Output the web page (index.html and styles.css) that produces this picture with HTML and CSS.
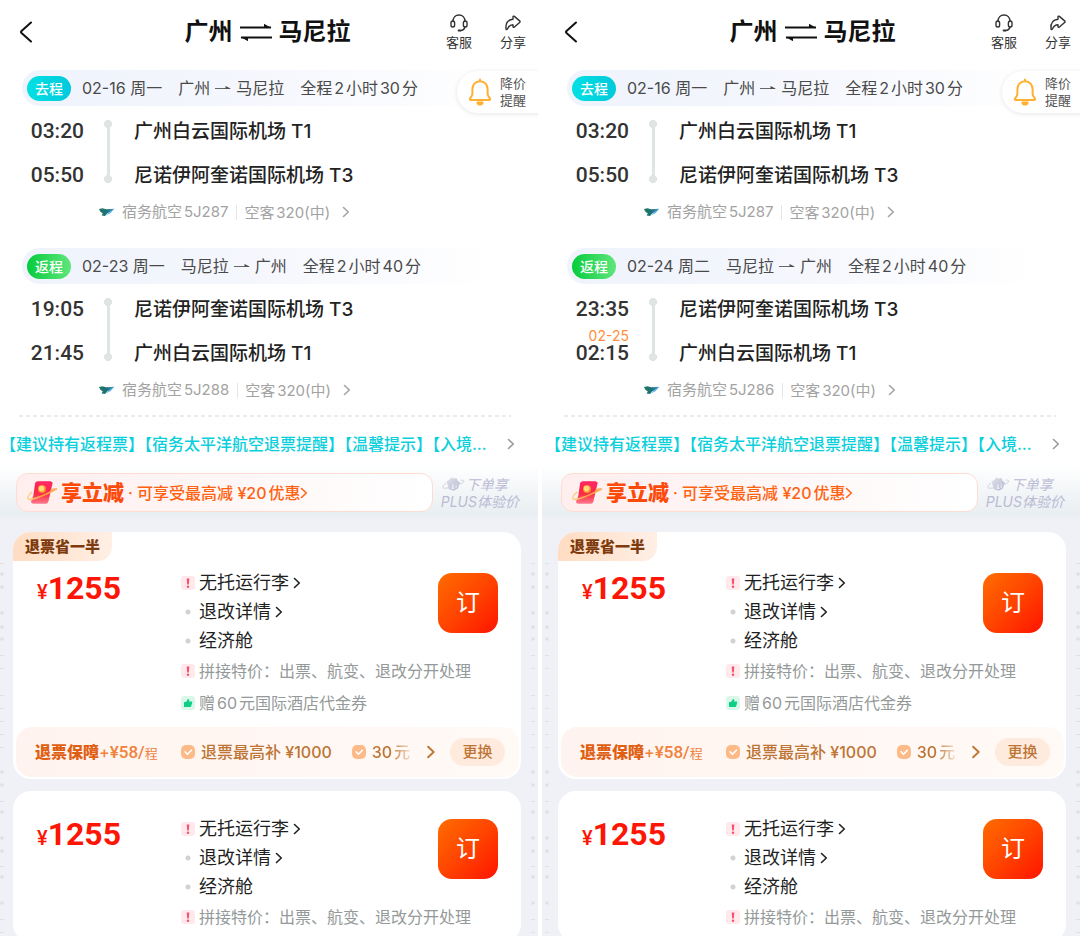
FILE: index.html
```html
<!DOCTYPE html>
<html lang="zh-CN">
<head>
<meta charset="utf-8">
<meta name="viewport" content="width=device-width, initial-scale=1">
<title>广州 ⇌ 马尼拉</title>
<link rel="stylesheet" href="styles.css">
</head>
<body>
<svg class="defs" width="0" height="0" aria-hidden="true">
  <defs>
    <linearGradient id="g-red" x1="0" y1="0" x2="0" y2="1"><stop offset="0" stop-color="#fb1c50"/><stop offset=".6" stop-color="#fb3048"/><stop offset="1" stop-color="#ff7b90"/></linearGradient>
    <linearGradient id="g-gold" x1="0" y1="0" x2="1" y2="0"><stop offset="0" stop-color="#ffd58a"/><stop offset=".5" stop-color="#ff9a3c"/><stop offset="1" stop-color="#ffb46a"/></linearGradient>
    <linearGradient id="g-plane" x1="0" y1="0" x2="1" y2="0"><stop offset="0" stop-color="#1f7a5a"/><stop offset=".5" stop-color="#1d6f7c"/><stop offset="1" stop-color="#4aa3dc"/></linearGradient>
    <linearGradient id="g-plus" x1="0" y1="0" x2="1" y2="1"><stop offset="0" stop-color="#e3e4ee"/><stop offset="1" stop-color="#b4b5cf"/></linearGradient>
  </defs>
  <symbol id="i-back" viewBox="0 0 14 22"><path d="M12 1.500 2.500 10q-1 1 0 2L12 20.500" fill="none" stroke="#111" stroke-width="2" stroke-linecap="round" stroke-linejoin="round"/></symbol>
  <symbol id="i-swap" viewBox="0 0 32 18"><path d="M0 4.500h31M32 14.500H1" fill="none" stroke="#111" stroke-width="1.800"/><path d="M24 .8 31.500 5H24zM8 18.200.500 14H8z" fill="#111"/></symbol>
  <symbol id="i-headset" viewBox="0 0 20 20"><g fill="none" stroke="#333" stroke-width="1.400" stroke-linecap="round"><path d="M4 8.500C4 4.500 6.500 2 10 2s6 2.500 6 6.500"/><rect x="2" y="8" width="3.600" height="6" rx="1.800"/><rect x="14.400" y="8" width="3.600" height="6" rx="1.800"/><path d="M16 14.200c-.6 2-2.200 3.200-4.600 3.400"/></g><rect x="8.600" y="16.600" width="3.800" height="2" rx="1" fill="#333"/></symbol>
  <symbol id="i-share" viewBox="0 0 18 18"><path d="M9 3c0-.9.700-1.200 1.400-.6l5.200 4.500c.6.500.6 1.100 0 1.600l-5.200 4.600c-.7.600-1.400.3-1.400-.6v-1.800c-2.600.1-4.300 1.300-5.600 4.300-.4.900-1.300.7-1.400-.2C1.500 9.500 4 5.800 9 5.300z" fill="none" stroke="#333" stroke-width="1.400" stroke-linejoin="round"/></symbol>
  <symbol id="i-bell" viewBox="0 0 24 28"><g fill="none" stroke="#ffb030" stroke-width="2" stroke-linecap="round" stroke-linejoin="round"><path d="M12 3.200c-4.800 0-7.600 3.600-7.600 8v4.600c0 2-.8 3-2 4.200-1 1-.7 2 .7 2h17.800c1.400 0 1.700-1 .7-2-1.200-1.200-2-2.200-2-4.200v-4.600c0-4.400-2.800-8-7.600-8z"/><path d="M12 1.600v1.600M9.400 24.500c.4 2.600 4.800 2.600 5.200 0z"/></g></symbol>
  <symbol id="i-arrow" viewBox="0 0 16 8"><path d="M0 4.500h15" stroke="#666"/><path d="M10.500 2 16 4.800h-5.500z" fill="#4d4d4d"/></symbol>
  <symbol id="i-chev" viewBox="0 0 8 12"><path d="m1.500 1.500 4.800 4.500-4.800 4.500" fill="none" stroke="currentColor" stroke-width="1.600" stroke-linecap="round" stroke-linejoin="round"/></symbol>
  <symbol id="i-plane" viewBox="0 0 16 10"><path d="M0 2 3.500 1.200 7 2.200l8.500-.4L12 4.600 8 6.500 6 9 2.600 8.600l1.200-2.200L1.200 4.600z" fill="url(#g-plane)"/><path d="m5.500 9 4-3L15 2.200l-3.600 4z" fill="#5bb4e6"/></symbol>
  <symbol id="i-gift" viewBox="0 0 32 26"><path d="M12 1.500h12c2 0 2.800 1 2.300 2.800L22.500 21c-.4 2-1.500 2.800-3.500 2.800H7.500c-2 0-2.800-1-2.200-3l2-5L9 4c.4-1.700 1.300-2.500 3-2.500z" fill="url(#g-red)"/><path d="M9.500 3c3 9 10 9 16 3l.8-3c0-1-1-1.500-2.300-1.500H12c-1.500 0-2.200.5-2.500 1.500z" fill="#ff2860"/><path d="M6 12C1 16 .6 19.500 4 19.400 11 19 23 13 31 8.800c-4 .3-5 .7-6.500 1.600" fill="none" stroke="url(#g-gold)" stroke-width="1.600"/><circle cx="16" cy="9" r="4" fill="#ff8e2e"/><circle cx="15.600" cy="8.600" r="2.800" fill="#ffdc7a"/></symbol>
  <symbol id="i-plus" viewBox="0 0 24 16"><path d="M5.500 5.500 8 4l2.200-2.500L13 2.600 15.500 2l1.300 3L19 6.500l-2.200 6-4 2.200-4.800-1.500z" fill="url(#g-plus)"/><path d="M12 7.500 13.500 13 10 12.500zM15 6l.8 5.500-1.300.8z" fill="#f4f4f9"/><path d="M5 7C1.500 9.500.8 12 3.500 12.200 9 12.400 18 9.500 22.500 6c1-1.600-.5-2-3-1.800" fill="none" stroke="#d0d1e2"/></symbol>
  <symbol id="i-warn" viewBox="0 0 14 14"><rect width="14" height="14" rx="3" fill="#ffe9ec"/><path d="M5.700 2.500h2.600l-.5 6H6.200z" fill="#f8506a"/><circle cx="7" cy="10.700" r="1.200" fill="#f8506a"/></symbol>
  <symbol id="i-thumb" viewBox="0 0 14 14"><rect width="14" height="14" rx="3" fill="#d9f8ea"/><path d="M3 6h2v5H3zM5 6l2-3c1.200 0 1.500.8 1.100 2.400h2.200c.8 0 1.100.5.900 1.200l-1 3.600c-.2.600-.5.800-1.100.8H5z" fill="#0ccf85"/></symbol>
  <symbol id="i-check" viewBox="0 0 14 14"><rect width="14" height="14" rx="5" fill="#fcba88"/><path d="m4 6.800 2.400 2.400 4-4" fill="none" stroke="#fff" stroke-width="1.600" stroke-linecap="round" stroke-linejoin="round"/></symbol>
  <symbol id="i-marks" viewBox="0 0 4 376"><g fill="#dfe0e4"><circle cx="2" cy="12" r="1.800"/><circle cx="2" cy="25" r="1.800"/><circle cx="2" cy="51" r="1.800"/><circle cx="2" cy="65" r="1.800"/><circle cx="2" cy="77" r="1.800"/><circle cx="2" cy="210" r="1.800"/><circle cx="2" cy="223" r="1.800"/><circle cx="2" cy="250" r="1.800"/><circle cx="2" cy="276" r="1.800"/><circle cx="2" cy="289" r="1.800"/><circle cx="2" cy="315" r="1.800"/><circle cx="2" cy="341" r="1.800"/></g><path d="M0 1.500h4M0 93.500h4M0 106.500h4M0 133.500h4M0 146.500h4M0 159.500h4M0 172.500h4M0 185.500h4M0 239.500h4M0 304.500h4M0 357.500h4M0 370.500h4" stroke="#dfe0e4"/></symbol>
</svg>

<main class="compare">
  <section class="panel panel-first">
    <header class="topbar">
      <button class="back" aria-label="返回"><svg width="14" height="22"><use href="#i-back"/></svg></button>
      <h1 class="title">广州<svg width="32" height="18"><use href="#i-swap"/></svg>马尼拉</h1>
      <nav class="actions">
        <button class="action"><svg width="20" height="20"><use href="#i-headset"/></svg>客服</button>
        <button class="action"><svg width="18" height="20"><use href="#i-share"/></svg>分享</button>
      </nav>
    </header>
    <button class="price-alert"><svg width="24" height="28"><use href="#i-bell"/></svg><span>降价<br>提醒</span></button>

    <article class="leg">
      <div class="strip"><span class="tag tag-out">去程</span><span>02-16 周一</span><span class="route">广州<svg width="16" height="8"><use href="#i-arrow"/></svg>马尼拉</span><span>全程2小时30分</span></div>
      <div class="stops">
        <time>03:20</time><i class="rail"></i><span class="airport">广州白云国际机场 T1</span>
        <time>05:50</time><span class="airport">尼诺伊阿奎诺国际机场 T3</span>
      </div>
      <a class="flight" href="#"><svg width="16" height="10"><use href="#i-plane"/></svg><span>宿务航空5J287</span><span class="plane">空客320(中)</span><svg class="chev" width="8" height="12"><use href="#i-chev"/></svg></a>
    </article>
    <article class="leg">
      <div class="strip"><span class="tag tag-back">返程</span><span>02-23 周一</span><span class="route">马尼拉<svg width="16" height="8"><use href="#i-arrow"/></svg>广州</span><span>全程2小时40分</span></div>
      <div class="stops">
        <time>19:05</time><i class="rail"></i><span class="airport">尼诺伊阿奎诺国际机场 T3</span>
        <time>21:45</time><span class="airport">广州白云国际机场 T1</span>
      </div>
      <a class="flight" href="#"><svg width="16" height="10"><use href="#i-plane"/></svg><span>宿务航空5J288</span><span class="plane">空客320(中)</span><svg class="chev" width="8" height="12"><use href="#i-chev"/></svg></a>
    </article>

    <hr class="dash">
    <a class="notice" href="#"><span>【建议持有返程票】【宿务太平洋航空退票提醒】【温馨提示】【入境…</span><svg width="8" height="12"><use href="#i-chev"/></svg></a>

    <div class="promos">
      <a class="promo" href="#"><svg width="32" height="26"><use href="#i-gift"/></svg><b>享立减</b><span>· 可享受最高减 ¥20优惠</span><svg width="8" height="12"><use href="#i-chev"/></svg></a>
      <a class="plus" href="#"><span><svg width="24" height="16"><use href="#i-plus"/></svg>下单享</span><span>PLUS体验价</span></a>
    </div>

    <div class="offers">
      <svg class="marks marks-l" width="4" height="376"><use href="#i-marks"/></svg>
      <svg class="marks marks-r" width="4" height="376"><use href="#i-marks"/></svg>
      <article class="card">
        <div class="ribbon">退票省一半</div>
        <div class="fare">
          <p class="price"><small>¥</small>1255</p>
          <ul class="terms">
            <li><svg width="14" height="14"><use href="#i-warn"/></svg><a href="#">无托运行李<svg width="8" height="12"><use href="#i-chev"/></svg></a></li>
            <li><i class="dot"></i><a href="#">退改详情<svg width="8" height="12"><use href="#i-chev"/></svg></a></li>
            <li><i class="dot"></i>经济舱</li>
            <li class="minor"><svg width="14" height="14"><use href="#i-warn"/></svg>拼接特价：出票、航变、退改分开处理</li>
            <li class="minor"><svg width="14" height="14"><use href="#i-thumb"/></svg>赠60元国际酒店代金券</li>
          </ul>
          <button class="book">订</button>
        </div>
        <div class="cover">
          <p class="cover-name"><b>退票保障</b>+<strong>¥58/</strong><small>程</small></p>
          <span class="perk"><svg width="14" height="14"><use href="#i-check"/></svg>退票最高补 ¥1000</span>
          <span class="perk perk-cut"><svg width="14" height="14"><use href="#i-check"/></svg>30元</span>
          <svg class="cover-chev" width="10" height="14"><use href="#i-chev"/></svg>
          <button class="swap">更换</button>
        </div>
      </article>
      <article class="card card-plain">
        <div class="fare">
          <p class="price"><small>¥</small>1255</p>
          <ul class="terms">
            <li><svg width="14" height="14"><use href="#i-warn"/></svg><a href="#">无托运行李<svg width="8" height="12"><use href="#i-chev"/></svg></a></li>
            <li><i class="dot"></i><a href="#">退改详情<svg width="8" height="12"><use href="#i-chev"/></svg></a></li>
            <li><i class="dot"></i>经济舱</li>
            <li class="minor"><svg width="14" height="14"><use href="#i-warn"/></svg>拼接特价：出票、航变、退改分开处理</li>
          </ul>
          <button class="book">订</button>
        </div>
      </article>
    </div>
  </section>

  <section class="panel panel-second">
    <header class="topbar">
      <button class="back" aria-label="返回"><svg width="14" height="22"><use href="#i-back"/></svg></button>
      <h1 class="title">广州<svg width="32" height="18"><use href="#i-swap"/></svg>马尼拉</h1>
      <nav class="actions">
        <button class="action"><svg width="20" height="20"><use href="#i-headset"/></svg>客服</button>
        <button class="action"><svg width="18" height="20"><use href="#i-share"/></svg>分享</button>
      </nav>
    </header>
    <button class="price-alert"><svg width="24" height="28"><use href="#i-bell"/></svg><span>降价<br>提醒</span></button>

    <article class="leg">
      <div class="strip"><span class="tag tag-out">去程</span><span>02-16 周一</span><span class="route">广州<svg width="16" height="8"><use href="#i-arrow"/></svg>马尼拉</span><span>全程2小时30分</span></div>
      <div class="stops">
        <time>03:20</time><i class="rail"></i><span class="airport">广州白云国际机场 T1</span>
        <time>05:50</time><span class="airport">尼诺伊阿奎诺国际机场 T3</span>
      </div>
      <a class="flight" href="#"><svg width="16" height="10"><use href="#i-plane"/></svg><span>宿务航空5J287</span><span class="plane">空客320(中)</span><svg class="chev" width="8" height="12"><use href="#i-chev"/></svg></a>
    </article>
    <article class="leg">
      <div class="strip"><span class="tag tag-back">返程</span><span>02-24 周二</span><span class="route">马尼拉<svg width="16" height="8"><use href="#i-arrow"/></svg>广州</span><span>全程2小时40分</span></div>
      <div class="stops">
        <time>23:35</time><i class="rail"></i><span class="airport">尼诺伊阿奎诺国际机场 T3</span>
        <time><span class="next-day">02-25</span>02:15</time><span class="airport">广州白云国际机场 T1</span>
      </div>
      <a class="flight" href="#"><svg width="16" height="10"><use href="#i-plane"/></svg><span>宿务航空5J286</span><span class="plane">空客320(中)</span><svg class="chev" width="8" height="12"><use href="#i-chev"/></svg></a>
    </article>

    <hr class="dash">
    <a class="notice" href="#"><span>【建议持有返程票】【宿务太平洋航空退票提醒】【温馨提示】【入境…</span><svg width="8" height="12"><use href="#i-chev"/></svg></a>

    <div class="promos">
      <a class="promo" href="#"><svg width="32" height="26"><use href="#i-gift"/></svg><b>享立减</b><span>· 可享受最高减 ¥20优惠</span><svg width="8" height="12"><use href="#i-chev"/></svg></a>
      <a class="plus" href="#"><span><svg width="24" height="16"><use href="#i-plus"/></svg>下单享</span><span>PLUS体验价</span></a>
    </div>

    <div class="offers">
      <svg class="marks marks-l" width="4" height="376"><use href="#i-marks"/></svg>
      <svg class="marks marks-r" width="4" height="376"><use href="#i-marks"/></svg>
      <article class="card">
        <div class="ribbon">退票省一半</div>
        <div class="fare">
          <p class="price"><small>¥</small>1255</p>
          <ul class="terms">
            <li><svg width="14" height="14"><use href="#i-warn"/></svg><a href="#">无托运行李<svg width="8" height="12"><use href="#i-chev"/></svg></a></li>
            <li><i class="dot"></i><a href="#">退改详情<svg width="8" height="12"><use href="#i-chev"/></svg></a></li>
            <li><i class="dot"></i>经济舱</li>
            <li class="minor"><svg width="14" height="14"><use href="#i-warn"/></svg>拼接特价：出票、航变、退改分开处理</li>
            <li class="minor"><svg width="14" height="14"><use href="#i-thumb"/></svg>赠60元国际酒店代金券</li>
          </ul>
          <button class="book">订</button>
        </div>
        <div class="cover">
          <p class="cover-name"><b>退票保障</b>+<strong>¥58/</strong><small>程</small></p>
          <span class="perk"><svg width="14" height="14"><use href="#i-check"/></svg>退票最高补 ¥1000</span>
          <span class="perk perk-cut"><svg width="14" height="14"><use href="#i-check"/></svg>30元</span>
          <svg class="cover-chev" width="10" height="14"><use href="#i-chev"/></svg>
          <button class="swap">更换</button>
        </div>
      </article>
      <article class="card card-plain">
        <div class="fare">
          <p class="price"><small>¥</small>1255</p>
          <ul class="terms">
            <li><svg width="14" height="14"><use href="#i-warn"/></svg><a href="#">无托运行李<svg width="8" height="12"><use href="#i-chev"/></svg></a></li>
            <li><i class="dot"></i><a href="#">退改详情<svg width="8" height="12"><use href="#i-chev"/></svg></a></li>
            <li><i class="dot"></i>经济舱</li>
            <li class="minor"><svg width="14" height="14"><use href="#i-warn"/></svg>拼接特价：出票、航变、退改分开处理</li>
          </ul>
          <button class="book">订</button>
        </div>
      </article>
    </div>
  </section>
</main>
</body>
</html>
```
FILE: styles.css
```css
* { box-sizing: border-box; }
body {
  margin: 0;
  background: #fff;
  color: #222;
  font: 400 16px/20px Inter, "Noto Sans CJK SC", sans-serif;
  text-autospace: normal;
}
a { color: inherit; text-decoration: none; }
button { border: 0; padding: 0; background: none; color: inherit; font: inherit; }
h1, p, ul { margin: 0; padding: 0; }
ul { list-style: none; }
svg { flex: none; }
.defs { position: absolute; }

.compare {
  display: grid;
  grid-template-columns: minmax(0, 1fr) minmax(0, 1fr);
  gap: 4px;
  height: 100vh;
  overflow: hidden;
}
.panel {
  position: relative;
  overflow: hidden;
  background: linear-gradient(#fff 464px, #e9eef2 514px, #eff1f6 520px);
}
.panel-first { padding-right: 3px; }
.panel-second { padding-left: 3px; }

/* Top bar */
.topbar {
  display: grid;
  grid-template-columns: 1fr auto 1fr;
  align-items: center;
  height: 70px;
  padding: 0 9px 6px 19px;
}
.back { justify-self: start; display: flex; }
.title {
  display: flex;
  align-items: center;
  gap: 7px;
  margin-right: 10px;
  color: #111;
  font-size: 24px;
  line-height: 32px;
  font-weight: 700;
}
.actions { display: flex; justify-content: flex-end; gap: 28px; }
.action {
  display: flex;
  flex-direction: column;
  align-items: center;
  color: #333;
  font-size: 13px;
  line-height: 18px;
}

.price-alert {
  position: absolute;
  z-index: 1;
  top: 71px;
  right: -12px;
  display: flex;
  align-items: center;
  gap: 8px;
  width: 93px;
  height: 42px;
  padding-left: 11px;
  border-radius: 22px 0 0 22px;
  background: #fff;
  box-shadow: 0 1px 5px rgba(0, 0, 0, .1);
  color: #555;
  font-size: 13px;
  line-height: 17px;
  text-align: left;
}
.panel-second .price-alert { width: 90px; }

/* Flight legs */
.leg { padding-left: 22px; }
.leg + .leg { margin-top: 21px; }
.strip {
  display: flex;
  align-items: center;
  gap: 16px;
  height: 36px;
  margin-right: 40px;
  padding-left: 5px;
  border-radius: 18px;
  background: linear-gradient(90deg, #eff3fc, #f5f7fd 50%, #fff);
  color: #4a4a4a;
  white-space: nowrap;
}
.tag {
  width: 44px;
  margin-right: -5px;
  border-radius: 13px;
  color: #fff;
  font-size: 14px;
  line-height: 25px;
  font-weight: 500;
  text-align: center;
}
.tag-out { background: linear-gradient(90deg, #02e0e4, #02c9dc); }
.tag-back { background: linear-gradient(90deg, #06cc3c, #5fe67c); }
.route { display: flex; align-items: center; gap: 5px; }
.stops {
  display: grid;
  grid-template-columns: 62px 48px 1fr;
  grid-template-rows: 44px 44px;
  align-items: center;
  margin-top: 3px;
}
.stops time {
  position: relative;
  grid-column: 1;
  color: #333;
  font: 500 21px/24px Roboto, sans-serif;
  text-align: right;
}
.next-day {
  position: absolute;
  right: 0;
  bottom: 22px;
  color: #ff8f3c;
  font: 400 14px/14px Inter, sans-serif;
}
.rail {
  grid-column: 2;
  grid-row: 1 / 3;
  justify-self: center;
  width: 8px;
  height: 63px;
  margin-bottom: 4px;
  background:
    radial-gradient(circle at 4px 4px, #dfe5e5 4px, transparent 4px),
    radial-gradient(circle at 4px 59px, #dfe5e5 4px, transparent 4px),
    linear-gradient(#dfe5e5, #dfe5e5) center / 3px 55px no-repeat;
}
.airport {
  grid-column: 3;
  padding: 2px 0 0 2px;
  font-size: 19px;
  line-height: 28px;
  font-weight: 500;
}
.flight {
  display: flex;
  align-items: center;
  height: 30px;
  padding-left: 77px;
  color: #a3a3a3;
  font-size: 15px;
}
.flight > svg:first-child { margin-right: 7px; }
.plane { margin-left: 8px; padding-left: 7px; border-left: 1px solid #e6e6e6; line-height: 15px; }
.chev { margin-left: 12px; }

.dash {
  height: 2px;
  margin: 10px 24px 0 19px;
  border: 0;
  background: repeating-linear-gradient(90deg, #ebebeb 0 4px, transparent 4px 7px);
}
.notice {
  display: flex;
  align-items: center;
  justify-content: space-between;
  height: 54px;
  padding-right: 20px;
  color: #999;
}
.notice span {
  overflow: hidden;
  color: #0bcfdc;
  font-weight: 500;
  white-space: nowrap;
}

/* Promotions */
.promos { display: flex; align-items: center; gap: 8px; padding: 2px 16px 0 16px; }
.promo {
  flex: 1;
  display: flex;
  align-items: center;
  height: 39px;
  padding-left: 9px;
  border: 1px solid #ffdcd2;
  border-radius: 12px;
  background: linear-gradient(90deg, #ffeeee, #fff);
  color: #ff6210;
  font-weight: 500;
  white-space: nowrap;
}
.promo b { margin: 0 4px 0 3px; color: #fc4a0a; font-size: 21px; font-weight: 900; }
.plus {
  display: flex;
  flex-direction: column;
  color: #babbd4;
  font-size: 14px;
  line-height: 17px;
  font-style: italic;
  text-autospace: no-autospace;
  white-space: nowrap;
}
.plus span { display: flex; align-items: center; gap: 1px; }

/* Fare cards */
.offers { position: relative; padding: 20px 14px 0 13px; }
.marks { position: absolute; top: 50px; }
.marks-l { left: 0; }
.marks-r { right: 0; }
.card {
  margin-bottom: 12px;
  padding-bottom: 2px;
  border-radius: 18px;
  background: #fff;
}
.ribbon {
  width: max-content;
  padding: 0 12px;
  border-radius: 18px 0 14px 0;
  background: linear-gradient(90deg, #ffdcc2, #ffefe5);
  color: #7d3a0c;
  font-size: 15px;
  line-height: 29px;
  font-weight: 900;
}
.fare { display: flex; align-items: flex-start; padding: 7px 23px 7px 24px; }
.card-plain .fare { padding-top: 23px; }
.price {
  flex: 0 0 144px;
  color: #fd1505;
  font: 700 32px/40px Roboto, sans-serif;
  white-space: nowrap;
}
.price small { font-size: 20px; font-weight: 500; }
.terms {
  flex: 1;
  min-width: 0;
  color: #1f1f1f;
  font-size: 18px;
  line-height: 29px;
  white-space: nowrap;
}
.terms li { display: flex; align-items: center; height: 29px; }
.terms li > svg, .dot { margin-right: 4px; }
.terms a { display: flex; align-items: center; gap: 4px; }
.terms .minor { height: 32px; color: #949999; font-size: 16px; }
.terms .minor + .minor { margin-bottom: 1px; }
.dot { flex: none; width: 14px; height: 14px; background: radial-gradient(circle, #d2d2d2 2px, transparent 3px); }
.book {
  flex: none;
  width: 60px;
  height: 60px;
  margin: 5px 0 0 -60px;
  border-radius: 14px;
  background: linear-gradient(135deg, #ff6d00, #ff4400 50%, #ff1400);
  color: #fff;
  font-size: 24px;
}
.cover {
  display: flex;
  align-items: center;
  height: 50px;
  margin: 0 2px 0 3px;
  padding: 0 14px 0 19px;
  border-radius: 16px;
  background: linear-gradient(90deg, #fff3ef, #fffaf6);
  color: #bd7434;
  font-weight: 500;
  white-space: nowrap;
}
.cover-name { flex: 0 0 146px; color: #f0823c; }
.cover-name b { color: #df6013; font-weight: 900; }
.cover-name strong { font: 500 17px/20px Roboto, "Noto Sans CJK SC", sans-serif; }
.cover-name small { font-size: 13px; font-weight: 400; }
.perk { display: flex; align-items: center; gap: 6px; }
.perk-cut {
  margin-left: 20px;
  mask-image: linear-gradient(90deg, #000 65%, rgba(0, 0, 0, .2));
}
.cover-chev { margin-left: auto; }
.swap {
  width: 55px;
  height: 28px;
  margin-left: 14px;
  border-radius: 14px;
  background: #ffebde;
  font-size: 15px;
}
```
